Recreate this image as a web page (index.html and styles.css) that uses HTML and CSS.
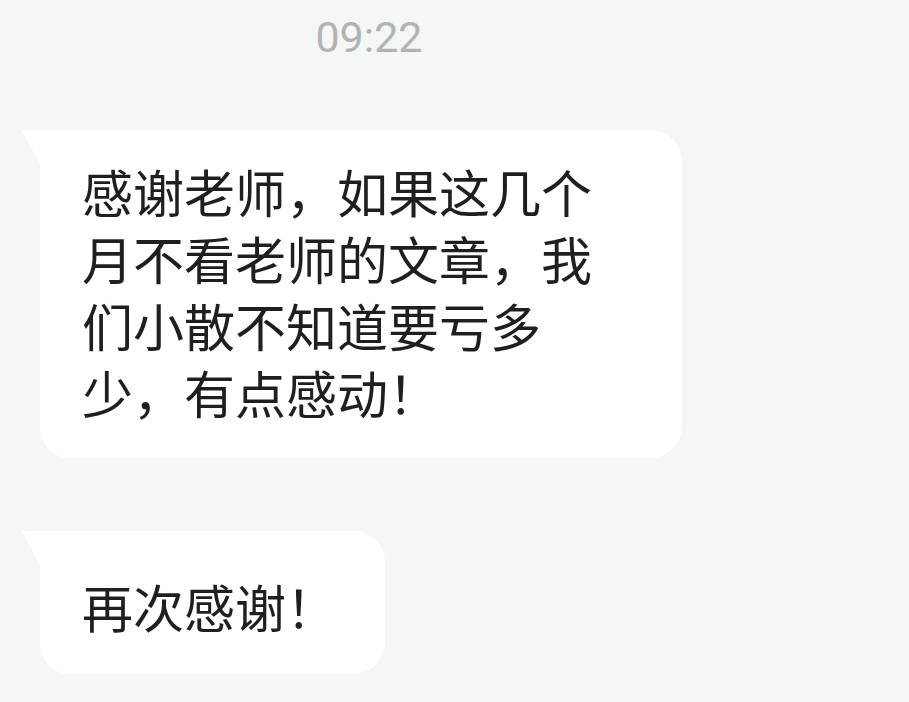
FILE: index.html
```html
<!DOCTYPE html>
<html lang="zh-CN">
<head>
  <meta charset="UTF-8" />
  <meta name="viewport" content="width=device-width, initial-scale=1.0"/>
  <title>聊天记录</title>
  <link rel="stylesheet" href="styles.css">
</head>
<body>
  <div class="time">09:22</div>

  <div class="messages">
    <div class="bubble long">感谢老师，如果这几个月不看老师的文章，我们小散不知道要亏多少，有点感动！</div>
    <div class="bubble short">再次感谢！</div>
  </div>
</body>
</html>
```

FILE: styles.css
```css
body {
  margin: 0;
  padding-top: 12px;
  background: #f5f6f6;
  font-family: "Noto Sans CJK SC", "Noto Sans", sans-serif;
  color: #1f1f1f;
}
.time {
  width: 738px;
  text-align: center;
  font-family: Roboto, "Liberation Sans", sans-serif;
  font-size: 43px;
  color: #b3b3b3;
}
.messages {
  display: flex;
  flex-direction: column;
  align-items: flex-start;
  gap: 73px;
  padding-top: 68px;
  padding-left: 40px;
}
.bubble {
  position: relative;
  background: #fff;
  font-size: 51px;
  line-height: 67px;
  border-radius: 0 32px 32px 30px;
  padding-left: 42px;
}
.bubble::before {
  content: "";
  position: absolute;
  top: 0;
  left: -18px;
  width: 19px;
  height: 36px;
  background: #fff;
  clip-path: polygon(0 0, 100% 0, 100% 100%);
}
.long {
  width: 520px;
  padding: 28px 80px 32px 42px;
}
.short {
  padding: 42px 48px 34px 42px;
}
```
